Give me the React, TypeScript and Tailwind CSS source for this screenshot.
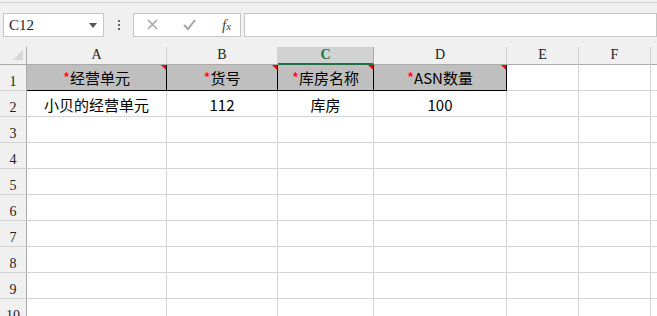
import React from "react";

const COLS = [
  { key: "A", w: 140 },
  { key: "B", w: 111 },
  { key: "C", w: 96 },
  { key: "D", w: 133 },
  { key: "E", w: 72 },
  { key: "F", w: 72 },
  { key: "", w: 60 },
];

const HEAD = ["经营单元", "货号", "库房名称", "ASN数量"];
const ROW2 = ["小贝的经营单元", "112", "库房", "100"];

const cjk = { fontFamily: '"Noto Sans CJK SC", "Noto Sans", sans-serif' };
const simsun = { fontFamily: '"Liberation Serif", "Noto Sans CJK SC", serif' };

function RedFlag() {
  return (
    <span className="absolute right-0 top-0 w-0 h-0 border-t-[5px] border-l-[5px] border-t-[#ff0000] border-l-transparent" />
  );
}

function Toolbar() {
  return (
    <div className="h-[47px] bg-[#f0f0f0] pt-[2px]">
      <div className="h-px bg-[#d2d2d2]" />
      <div className="flex items-start pt-[10px]">
        <div className="ml-[3px] w-[103px] h-[24px] bg-white border border-[#c6c6c6] flex items-center justify-between pl-[5px] pr-[6px]">
          <span className="text-[15px] text-[#222] leading-none" style={simsun}>C12</span>
          <span className="w-0 h-0 border-t-[5px] border-x-[4px] border-t-[#555] border-x-transparent" />
        </div>
        <div className="w-[29px] h-[24px] flex flex-col items-center justify-center gap-[2px]">
          <span className="w-[2px] h-[2px] bg-[#666]" />
          <span className="w-[2px] h-[2px] bg-[#666]" />
          <span className="w-[2px] h-[2px] bg-[#666]" />
        </div>
        <div className="w-[110px] h-[24px] bg-white border border-[#c6c6c6] flex items-center">
          <svg width="36" height="22" viewBox="0 0 36 22" className="ml-[1px]">
            <path d="M13 6 L22 15 M22 6 L13 15" stroke="#a6a6a6" strokeWidth="1.5" />
          </svg>
          <svg width="36" height="22" viewBox="0 0 36 22">
            <path d="M13 11 L17 15 L24 6" stroke="#a6a6a6" strokeWidth="2" fill="none" />
          </svg>
          <span className="ml-[15px] text-[15px] italic text-[#444] leading-none" style={{ fontFamily: '"Liberation Serif", serif' }}>
            f<span className="text-[11px]">x</span>
          </span>
        </div>
        <div className="ml-[3px] w-[420px] h-[24px] bg-white border border-[#c6c6c6]" />
      </div>
    </div>
  );
}

function ColHeader() {
  return (
    <div className="flex h-[18px] bg-[#f0f0f0]">
      <div className="relative shrink-0 w-[27px] h-full border-r border-b border-[#ababab]">
        <span className="absolute right-[3px] bottom-[4px] w-0 h-0 border-b-[10px] border-l-[10px] border-b-[#d6d6d6] border-l-transparent" />
      </div>
      {COLS.map((c, i) =>
        c.key === "C" ? (
          <div
            key={i}
            className="shrink-0 h-full bg-[#d2d2d2] border-r border-[#ababab] border-b-2 border-b-[#217346] flex items-end justify-center pb-[1px] text-[14px] font-bold text-[#217346] leading-none"
            style={{ width: c.w, ...simsun }}
          >
            C
          </div>
        ) : (
          <div
            key={i}
            className="shrink-0 h-full border-r border-[#d0d0d0] border-b border-b-[#ababab] flex items-end justify-center pb-[2px] text-[14px] text-[#222] leading-none"
            style={{ width: c.w, ...simsun }}
          >
            {c.key}
          </div>
        )
      )}
    </div>
  );
}

function RowNum({ n }: { n: number }) {
  return (
    <div
      className="shrink-0 w-[27px] h-[26px] bg-[#f0f0f0] border-r border-r-[#ababab] border-b border-b-[#d4d4d4] flex items-end justify-center pb-[1px] text-[14px] text-[#222] leading-none"
      style={simsun}
    >
      {n}
    </div>
  );
}

export default function App() {
  const rows = [1, 2, 3, 4, 5, 6, 7, 8, 9, 10];
  return (
    <div className="w-[657px] h-[316px] overflow-hidden bg-white">
      <Toolbar />
      <ColHeader />
      {rows.map((r) => (
        <div key={r} className="flex">
          <RowNum n={r} />
          {COLS.map((c, i) => {
            if (r === 1 && i < 4) {
              return (
                <div
                  key={i}
                  className="relative shrink-0 h-[26px] bg-[#bfbfbf] border-r border-b border-black flex items-center justify-center text-[15px] text-black leading-none"
                  style={{ width: c.w, ...cjk }}
                >
                  <span className="text-[#ff0000] text-[15px]">*</span>
                  {HEAD[i]}
                  <RedFlag />
                </div>
              );
            }
            return (
              <div
                key={i}
                className="shrink-0 h-[26px] border-r border-b border-[#d4d4d4] flex items-center justify-center pt-[2px] text-[15px] text-black leading-none"
                style={{ width: c.w, ...cjk }}
              >
                {r === 2 && i < 4 ? ROW2[i] : ""}
              </div>
            );
          })}
        </div>
      ))}
    </div>
  );
}
